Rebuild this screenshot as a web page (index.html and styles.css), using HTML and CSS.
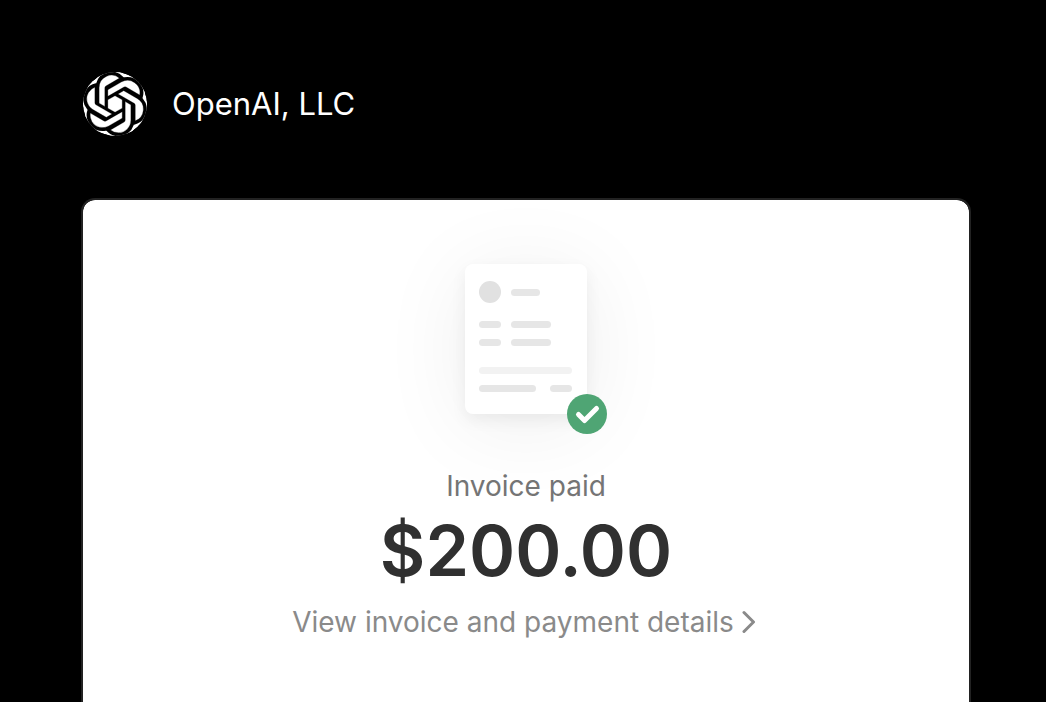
FILE: index.html
```html
<!DOCTYPE html>
<html lang="en">
<head>
    <meta charset="UTF-8">
    <meta name="viewport" content="width=device-width, initial-scale=1.0">
    <title>Invoice paid</title>
    <link rel="stylesheet" href="styles.css">
</head>
<body>
    <header class="merchant">
        <svg class="merchant-logo" viewBox="0.400 0.400 23.200 23.200" aria-hidden="true">
            <circle cx="12" cy="12" r="11.600" fill="#fff"/>
            <path d="M22.2819 9.8211a5.9847 5.9847 0 0 0-.5157-4.9108 6.0462 6.0462 0 0 0-6.5098-2.9A6.0651 6.0651 0 0 0 4.9807 4.1818a5.9847 5.9847 0 0 0-3.9977 2.9 6.0462 6.0462 0 0 0 .7427 7.0966 5.98 5.98 0 0 0 .511 4.9107 6.051 6.051 0 0 0 6.5146 2.9001A5.9847 5.9847 0 0 0 13.2599 24a6.0557 6.0557 0 0 0 5.7718-4.2058 5.9894 5.9894 0 0 0 3.9977-2.9001 6.0557 6.0557 0 0 0-.7475-7.0729z" fill="#000" stroke="#fff" stroke-width=".6"/>
            <path d="M13.2599 22.4292a4.4755 4.4755 0 0 1-2.8764-1.0408l.1419-.0804 4.7783-2.7582a.7948.7948 0 0 0 .3927-.6813v-6.7369l2.02 1.1686a.071.071 0 0 1 .038.052v5.5826a4.504 4.504 0 0 1-4.4945 4.4944zm-9.6607-4.1254a4.4708 4.4708 0 0 1-.5346-3.0137l.142.0852 4.783 2.7582a.7712.7712 0 0 0 .7806 0l5.8428-3.3685v2.3324a.0804.0804 0 0 1-.0332.0615L9.74 19.9502a4.4992 4.4992 0 0 1-6.1408-1.6464zM2.3408 7.8956a4.485 4.485 0 0 1 2.3655-1.9728V11.6a.7664.7664 0 0 0 .3879.6765l5.8144 3.3543-2.0201 1.1685a.0757.0757 0 0 1-.071 0l-4.8303-2.7865A4.504 4.504 0 0 1 2.3408 7.8956zm16.5963 3.8558L13.1038 8.364 15.1192 7.2a.0757.0757 0 0 1 .071 0l4.8303 2.7913a4.4944 4.4944 0 0 1-.6765 8.1042v-5.6772a.79.79 0 0 0-.407-.667zm2.0107-3.0231l-.142-.0852-4.7735-2.7818a.7759.7759 0 0 0-.7854 0L9.409 9.2297V6.8974a.0662.0662 0 0 1 .0284-.0615l4.8303-2.7866a4.4992 4.4992 0 0 1 6.6802 4.66zM8.3065 12.863l-2.02-1.1638a.0804.0804 0 0 1-.038-.0567V6.0742a4.4992 4.4992 0 0 1 7.3757-3.4537l-.142.0805L8.704 5.459a.7948.7948 0 0 0-.3927.6813zm1.0976-2.3654l2.602-1.4998 2.6069 1.4998v2.9994l-2.5974 1.4997-2.6067-1.4997Z" fill="#fff" stroke="#000" stroke-width=".1"/>
        </svg>
        <span class="merchant-name">OpenAI, LLC</span>
    </header>

    <main class="card">
        <div class="invoice-icon">
            <svg class="invoice-lines" viewBox="0 0 122 150" aria-hidden="true">
                <circle cx="25" cy="28" r="11" fill="#e1e1e1"/>
                <g fill="#e6e6e6">
                    <rect x="46" y="25" width="29" height="7" rx="3.5"/>
                    <rect x="14" y="57" width="22" height="7" rx="3.5"/>
                    <rect x="46" y="57" width="40" height="7" rx="3.5"/>
                    <rect x="14" y="75" width="22" height="7" rx="3.5"/>
                    <rect x="46" y="75" width="40" height="7" rx="3.5"/>
                    <rect x="14" y="121" width="57" height="7" rx="3.5"/>
                    <rect x="85" y="121" width="22" height="7" rx="3.5"/>
                </g>
                <rect x="14" y="103" width="93" height="7" rx="3.5" fill="#f2f2f2"/>
            </svg>
            <svg class="paid-badge" viewBox="0 0 40 40" aria-hidden="true">
                <circle cx="20" cy="20" r="20" fill="#4fa574"/>
                <path d="M11.500 20.500l6 6L29.500 14.500" fill="none" stroke="#fff" stroke-width="5" stroke-linecap="round" stroke-linejoin="round"/>
            </svg>
        </div>
        <p class="status">Invoice paid</p>
        <h1 class="amount">$200.00</h1>
        <a class="details-link" href="#details">
            View invoice and payment details
            <svg class="chevron" viewBox="0 0 14 24" aria-hidden="true">
                <path d="M2 2.500L11.500 12 2 21.500" fill="none" stroke="#8a8a8a" stroke-width="3" stroke-linecap="round" stroke-linejoin="round"/>
            </svg>
        </a>
    </main>
</body>
</html>
```
FILE: styles.css
```css
body {
    font-family: Inter, "Liberation Sans", sans-serif;
    background-color: #000;
    margin: 0;
    padding: 72px 75px 0 81px;
    min-height: 100vh;
    box-sizing: border-box;
    display: flex;
    flex-direction: column;
}

.merchant {
    display: flex;
    align-items: center;
    gap: 25px;
    margin: 0 2px 62px;
}

.merchant-logo {
    width: 64px;
    height: 64px;
    border-radius: 50%;
}

.merchant-name {
    color: #fff;
    font-size: 31px;
    line-height: 40px;
}

.card {
    flex: 1;
    display: flex;
    flex-direction: column;
    align-items: center;
    background-color: #fff;
    background-clip: padding-box;
    border: 2px solid #222;
    border-bottom: none;
    border-radius: 14px 14px 0 0;
    padding: 64px 24px;
}

.invoice-icon {
    position: relative;
    width: 122px;
    height: 150px;
    background-color: #fff;
    border-radius: 8px;
    box-shadow: 0 6px 16px rgba(0, 0, 0, 0.06), 0 10px 90px rgba(0, 0, 0, 0.07);
}

.invoice-lines {
    display: block;
    width: 100%;
}

.paid-badge {
    position: absolute;
    right: -20px;
    bottom: -20px;
    width: 40px;
    height: 40px;
}

.status {
    margin: 52px 0 0;
    color: #757575;
    font-size: 28px;
    line-height: 40px;
}

.amount {
    margin: 0;
    color: #303030;
    font-size: 70px;
    font-weight: 600;
    line-height: 90px;
}

.details-link {
    display: flex;
    align-items: center;
    gap: 8px;
    padding-right: 4px;
    color: #8a8a8a;
    font-size: 28px;
    line-height: 52px;
    text-decoration: none;
}

.chevron {
    width: 14px;
    height: 24px;
}
```
